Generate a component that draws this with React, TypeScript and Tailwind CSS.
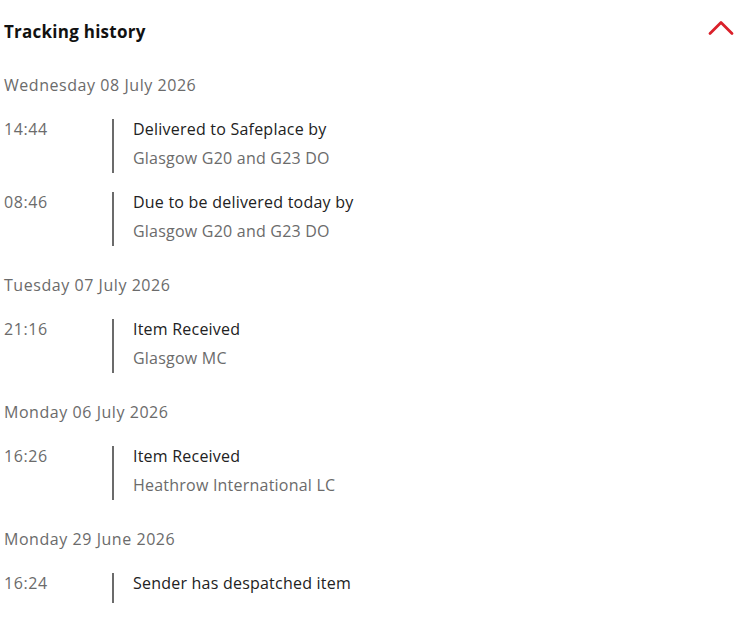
import React from "react";

type Ev = { time: string; title: string; place?: string };
type Day = { date: string; events: Ev[] };

const days: Day[] = [
  {
    date: "Wednesday 08 July 2026",
    events: [
      { time: "14:44", title: "Delivered to Safeplace by", place: "Glasgow G20 and G23 DO" },
      { time: "08:46", title: "Due to be delivered today by", place: "Glasgow G20 and G23 DO" },
    ],
  },
  {
    date: "Tuesday 07 July 2026",
    events: [{ time: "21:16", title: "Item Received", place: "Glasgow MC" }],
  },
  {
    date: "Monday 06 July 2026",
    events: [{ time: "16:26", title: "Item Received", place: "Heathrow International LC" }],
  },
  {
    date: "Monday 29 June 2026",
    events: [{ time: "16:24", title: "Sender has despatched item" }],
  },
];

export default function App() {
  return (
    <div className="w-[740px] min-h-[622px] bg-white pl-[4px] pr-[6px] font-['Open_Sans',Arial,sans-serif]">
      <div className="flex h-[62px] items-center justify-between">
        <h2 className="text-[17px] font-bold tracking-[0.25px] text-[#111] mt-[2px]">Tracking history</h2>
        <svg width="26" height="16" viewBox="0 0 26 16" className="mb-[6px]" fill="none">
          <path d="M2 13.5 L13 2.5 L24 13.5" stroke="#da202a" strokeWidth="2.8" strokeLinecap="round" strokeLinejoin="round" />
        </svg>
      </div>
      <div className="flex flex-col">
        {days.map((d, i) => (
          <div key={d.date} className={i === 0 ? "mt-[11px]" : "mt-[27.5px]"}>
            <div className="text-[16px] leading-[24px] tracking-[0.55px] text-[#6b6b6b]">{d.date}</div>
            <div className="flex flex-col gap-[15px] mt-[17.5px]">
              {d.events.map((e) => (
                <div key={e.time} className="flex">
                  <div className="w-[108px] shrink-0 text-[16px] leading-[29px] tracking-[0.6px] text-[#6b6b6b]">{e.time}</div>
                  <div className="w-[2px] shrink-0 mt-[4.5px] min-h-[30px] bg-[#6b6b6b]" />
                  <div className="pl-[19px] text-[16px] leading-[29px] tracking-[0.22px]">
                    <div className="text-[#222]">{e.title}</div>
                    {e.place && <div className="text-[#6b6b6b]">{e.place}</div>}
                  </div>
                </div>
              ))}
            </div>
          </div>
        ))}
      </div>
    </div>
  );
}
